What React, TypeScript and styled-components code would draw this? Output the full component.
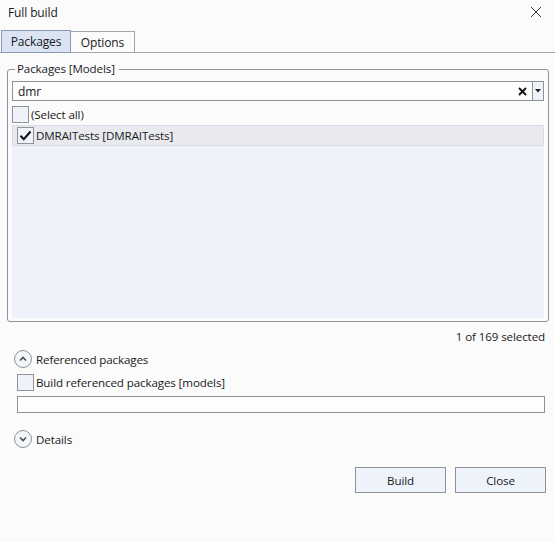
import React from "react";
import styled, { createGlobalStyle } from "styled-components";

const Global = createGlobalStyle`
  html, body { margin: 0; padding: 0; background: #fbfbfc; }
  body {
    font-family: "Open Sans", "Noto Sans", sans-serif;
    font-size: 11.6px;
    letter-spacing: -0.12px;
    color: #1a1a1a;
  }
  * { box-sizing: border-box; }
`;

const Window = styled.div`
  width: 555px;
  height: 542px;
  display: flex;
  flex-direction: column;
  background: #fbfbfc;
`;

const TitleBar = styled.div`
  height: 24px;
  display: flex;
  align-items: center;
  justify-content: space-between;
  padding: 0 13px 0 8px;
  font-size: 12px;
`;

const CloseGlyph = styled.svg`
  width: 12px;
  height: 12px;
`;

const TabStrip = styled.div`
  margin-top: 6px;
  height: 23px;
  display: flex;
  align-items: flex-end;
  padding-left: 1px;
  border-bottom: 1px solid #a3a7ad;
`;

const Tab = styled.div<{ $active?: boolean; $w: number }>`
  width: ${(p) => p.$w}px;
  height: ${(p) => (p.$active ? 23 : 22)}px;
  margin-bottom: -1px;
  display: flex;
  align-items: center;
  justify-content: center;
  border: 1px solid ${(p) => (p.$active ? "#8a98b2" : "#a3a7ad")};
  border-left-width: ${(p) => (p.$active ? 1 : 0)}px;
  background: ${(p) => (p.$active ? "#dbe4f2" : "#fbfbfc")};
  font-size: 12px;
`;

const Body = styled.div`
  padding: 0 6px 0 7px;
  display: flex;
  flex-direction: column;
`;

const GroupBox = styled.fieldset`
  margin: 8px 0 0;
  padding: 0 4px 3px 4px;
  border: 1px solid #8e939b;
  border-radius: 3px;
  min-width: 0;
`;

const Legend = styled.legend`
  margin-left: 3px;
  padding: 0 4px 0 2px;
  line-height: 16px;
`;

const SearchBox = styled.div`
  margin-top: 4px;
  height: 20px;
  display: flex;
  align-items: stretch;
  border: 1px solid #8e939b;
  background: #fdfdfe;
`;

const SearchText = styled.div`
  flex: 1;
  display: flex;
  align-items: center;
  padding-left: 5px;
  font-size: 12px;
`;

const ClearButton = styled.div`
  width: 20px;
  display: flex;
  align-items: center;
  justify-content: center;
`;

const DropButton = styled.div`
  width: 11px;
  border-left: 1px solid #8e939b;
  background: #eef2f9;
  display: flex;
  align-items: center;
  justify-content: center;
`;

const CheckRow = styled.div<{ $indent?: number }>`
  display: flex;
  align-items: center;
  gap: 2px;
  margin-left: ${(p) => p.$indent ?? 0}px;
`;

const Box = styled.div`
  width: 17px;
  height: 17px;
  border: 1px solid #8e939b;
  background: #eef2f9;
  display: flex;
  align-items: center;
  justify-content: center;
`;

const SelectAll = styled(CheckRow)`
  margin-top: 5px;
  height: 17px;
`;

const ListArea = styled.div`
  margin-top: 2px;
  height: 193px;
  background: #eef2fa;
  display: flex;
  flex-direction: column;
`;

const ListItem = styled.div<{ $selected?: boolean }>`
  height: 21px;
  display: flex;
  align-items: center;
  gap: 2px;
  padding-left: 4px;
  background: ${(p) => (p.$selected ? "#e8eaef" : "transparent")};
  border: 1px solid ${(p) => (p.$selected ? "#dadde3" : "transparent")};
`;

const Status = styled.div`
  margin-top: 7px;
  height: 16px;
  line-height: 16px;
  text-align: right;
  padding-right: 4px;
`;

const Expander = styled.div<{ $top: number }>`
  margin-top: ${(p) => p.$top}px;
  height: 18px;
  display: flex;
  align-items: center;
  gap: 4px;
  padding-left: 7px;
`;

const Circle = styled.div`
  width: 18px;
  height: 18px;
  border-radius: 50%;
  border: 1px solid #8e939b;
  background: #f3f5fa;
  display: flex;
  align-items: center;
  justify-content: center;
`;

const BuildOption = styled(CheckRow)`
  margin-top: 6px;
  height: 17px;
`;

const PathField = styled.div`
  margin: 5px 4px 0 10px;
  height: 17px;
  border: 1px solid #8e939b;
  background: #fdfdfe;
`;

const ButtonRow = styled.div`
  margin-top: 19px;
  display: flex;
  justify-content: flex-end;
  gap: 9px;
  padding-right: 3px;
`;

const Button = styled.div`
  width: 91px;
  height: 26px;
  border: 1px solid #8e939b;
  background: #eef2fa;
  display: flex;
  align-items: center;
  justify-content: center;
`;

const Check = () => (
  <svg width="13" height="13" viewBox="0 0 13 13">
    <path d="M1.5 6.8 L4.8 10.2 L11.5 2.5" fill="none" stroke="#111" strokeWidth="2" />
  </svg>
);

const Chevron = ({ up }: { up?: boolean }) => (
  <svg width="10" height="10" viewBox="0 0 10 10">
    <path
      d={up ? "M2 6.5 L5 3.5 L8 6.5" : "M2 3.5 L5 6.5 L8 3.5"}
      fill="none"
      stroke="#4a4d52"
      strokeWidth="1.6"
    />
  </svg>
);

export default function App() {
  return (
    <Window>
      <Global />
      <TitleBar>
        <span>Full build</span>
        <CloseGlyph viewBox="0 0 12 12">
          <path d="M1 1 L11 11 M11 1 L1 11" stroke="#333" strokeWidth="1" />
        </CloseGlyph>
      </TitleBar>
      <TabStrip>
        <Tab $active $w={70}>Packages</Tab>
        <Tab $w={64}>Options</Tab>
      </TabStrip>
      <Body>
        <GroupBox>
          <Legend>Packages [Models]</Legend>
          <SearchBox>
            <SearchText>dmr</SearchText>
            <ClearButton>
              <svg width="9" height="9" viewBox="0 0 9 9">
                <path d="M1 1 L8 8 M8 1 L1 8" stroke="#111" strokeWidth="1.8" />
              </svg>
            </ClearButton>
            <DropButton>
              <svg width="6" height="4" viewBox="0 0 6 4">
                <path d="M0 0 H6 L3 3.5 Z" fill="#222" />
              </svg>
            </DropButton>
          </SearchBox>
          <SelectAll>
            <Box />
            <span>(Select all)</span>
          </SelectAll>
          <ListArea>
            <ListItem $selected>
              <Box>
                <Check />
              </Box>
              <span>DMRAITests [DMRAITests]</span>
            </ListItem>
          </ListArea>
        </GroupBox>
        <Status>1 of 169 selected</Status>
        <Expander $top={5}>
          <Circle>
            <Chevron up />
          </Circle>
          <span>Referenced packages</span>
        </Expander>
        <BuildOption $indent={10}>
          <Box />
          <span>Build referenced packages [models]</span>
        </BuildOption>
        <PathField />
        <Expander $top={17}>
          <Circle>
            <Chevron />
          </Circle>
          <span>Details</span>
        </Expander>
        <ButtonRow>
          <Button>Build</Button>
          <Button>Close</Button>
        </ButtonRow>
      </Body>
    </Window>
  );
}
